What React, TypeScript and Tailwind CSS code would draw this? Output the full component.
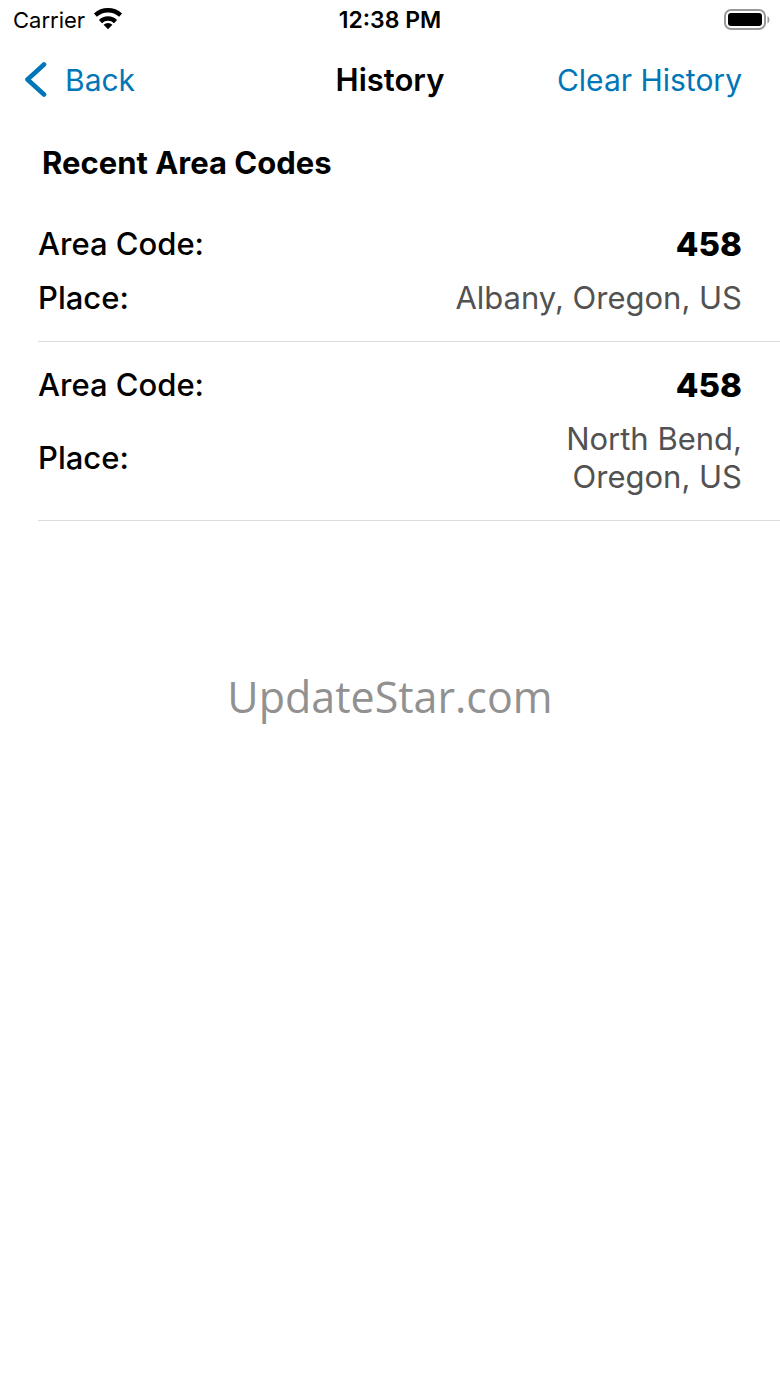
const entries = [
  { id: 1, code: "458", place: "Albany, Oregon, US" },
  { id: 2, code: "458", place: "North Bend, Oregon, US" },
];

function StatusBar() {
  return (
    <div className="grid h-10 grid-cols-[1fr_auto_1fr] items-center">
      <div className="flex items-center gap-2 pl-[13px] text-[22px]">
        <span>Carrier</span>
        <svg width="30" height="24" viewBox="0 0 30 24" fill="none" stroke="black" strokeWidth="4.4" aria-hidden="true">
          <path d="M2.4 7.1a18.8 18.8 0 0 1 25.2 0" />
          <path d="M7.5 13.6a10.8 10.8 0 0 1 15 0" />
          <path d="M15 21.2l-4.4-4.400a6.400 6.400 0 0 1 8.800 0z" fill="black" stroke="none" />
        </svg>
      </div>
      <time className="text-center text-[23px] font-semibold">12:38 PM</time>
      <div className="flex justify-end pr-2">
        <svg width="48" height="22" viewBox="0 0 48 22" fill="none" aria-hidden="true">
          <rect x="1" y="1" width="40" height="19" rx="6" stroke="#999" strokeWidth="2" />
          <rect x="4" y="4" width="34" height="13" rx="3" fill="black" />
          <path d="M43.5 7a4.5 4.5 0 0 1 0 7.5z" fill="#999" />
        </svg>
      </div>
    </div>
  );
}

function Entry({ code, place }: { code: string; place: string }) {
  return (
    <li className="ml-[38px] border-b border-[#dcdcdc] py-6 pr-[38px]">
      <dl className="space-y-4 text-[31px] leading-[38px]">
        <div className="flex items-center justify-between">
          <dt className="font-medium">Area Code:</dt>
          <dd className="text-[33px] font-extrabold">{code}</dd>
        </div>
        <div className="flex items-center justify-between">
          <dt className="font-medium">Place:</dt>
          <dd className="max-w-[45%] text-right text-balance text-[#525252]">{place}</dd>
        </div>
      </dl>
    </li>
  );
}

export default function App() {
  return (
    <div className="relative min-h-screen bg-white font-['Inter',sans-serif] text-black">
      <StatusBar />

      <header className="grid h-20 grid-cols-[1fr_auto_1fr] items-center px-6 text-[30px]">
        <button type="button" className="flex items-center gap-[18px] text-[#0076b8]">
          <svg
            width="23"
            height="36"
            viewBox="0 0 23 36"
            fill="none"
            stroke="currentColor"
            strokeWidth="4.6"
            strokeLinecap="round"
            strokeLinejoin="round"
            aria-hidden="true"
          >
            <path d="M20 2.5L3.5 17.5L20 32.5" />
          </svg>
          Back
        </button>
        <h1 className="text-[31px] font-semibold">History</h1>
        <button type="button" className="justify-self-end pr-[14px] text-[#0076b8]">
          Clear History
        </button>
      </header>

      <main>
        <h2 className="px-[42px] pt-6 pb-[19px] text-[31px] leading-[38px] font-bold">Recent Area Codes</h2>
        <ul>
          {entries.map((entry) => (
            <Entry key={entry.id} code={entry.code} place={entry.place} />
          ))}
        </ul>
      </main>

      {/* Watermark */}
      <div className="pointer-events-none absolute inset-0 flex items-center justify-center pt-2">
        <span className="font-['Open_Sans',sans-serif] text-[43px] text-[#919191]">UpdateStar.com</span>
      </div>
    </div>
  );
}
